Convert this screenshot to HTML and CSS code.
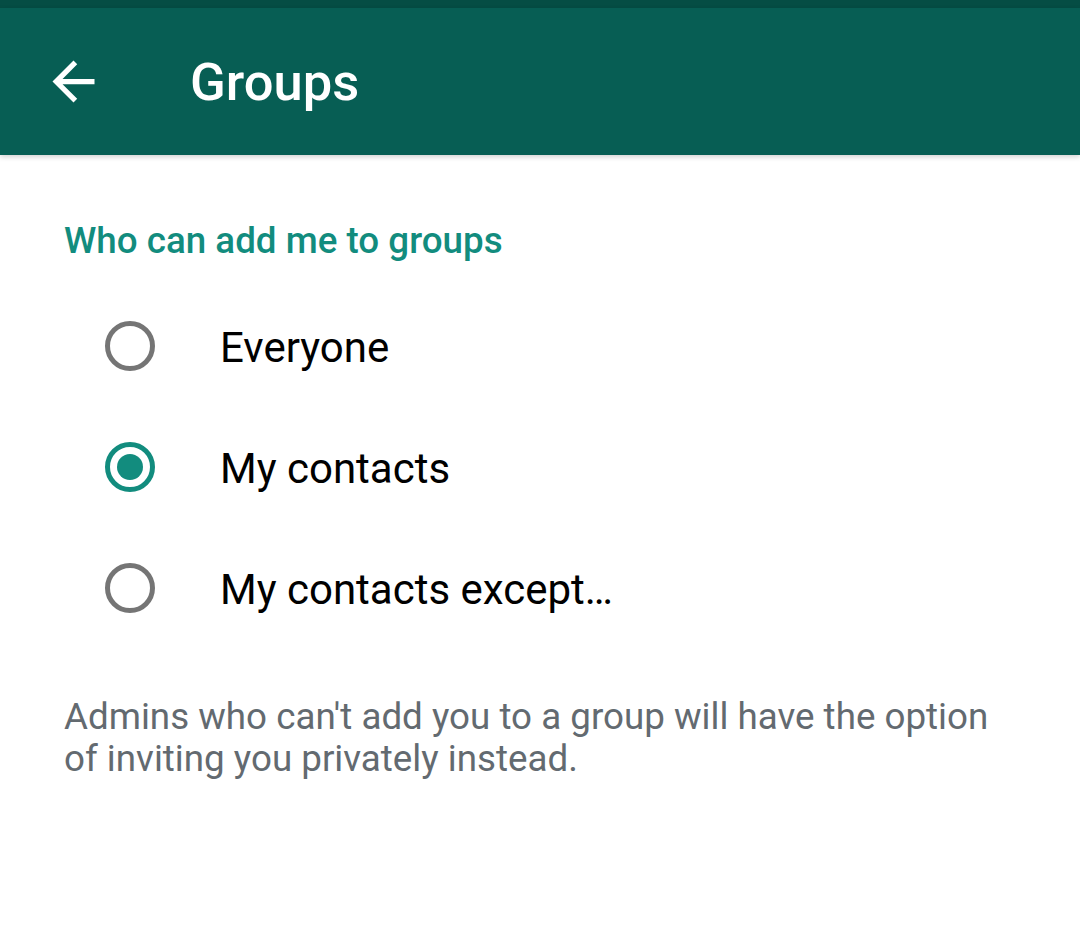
FILE: index.html
```html
<!DOCTYPE html>
<html>
<head>
<meta charset="utf-8">
<link rel="stylesheet" href="styles.css">
</head>
<body>
<div class="status"></div>
<header class="toolbar">
  <svg class="back" viewBox="0 0 24 24" width="63" height="63"><path fill="#fff" d="M20 11H7.83l5.59-5.59L12 4l-8 8 8 8 1.41-1.41L7.83 13H20v-2z"/></svg>
  <h1 class="title">Groups</h1>
</header>
<main class="content">
  <h2 class="section">Who can add me to groups</h2>
  <div class="options">
    <div class="row"><span class="radio"></span><span class="label">Everyone</span></div>
    <div class="row"><span class="radio on"></span><span class="label">My contacts</span></div>
    <div class="row"><span class="radio"></span><span class="label">My contacts except…</span></div>
  </div>
  <p class="note">Admins who can't add you to a group will have the option of inviting you privately instead.</p>
</main>
</body>
</html>
```
FILE: styles.css
```css
html, body {
  margin: 0;
  padding: 0;
  background: #fff;
  font-family: Roboto, "Noto Sans", sans-serif;
}
.status {
  height: 8px;
  background: #054d44;
}
.toolbar {
  height: 147px;
  background: #075e54;
  display: flex;
  align-items: center;
  box-shadow: 0 2px 5px rgba(0,0,0,0.18);
  position: relative;
}
.back {
  margin-left: 42px;
  flex: none;
}
.title {
  margin: 2px 0 0 85px;
  color: #fff;
  font-size: 52.5px;
  font-weight: 500;
  line-height: 1;
}
.content {
  padding: 68px 64px 0 64px;
}
.section {
  margin: 0;
  color: #128c7e;
  font-size: 36.75px;
  font-weight: 500;
  line-height: 1;
}
.options {
  margin-top: 25.5px;
}
.row {
  height: 121px;
  display: flex;
  align-items: center;
}
.radio {
  box-sizing: border-box;
  width: 50px;
  height: 50px;
  border: 5px solid #757575;
  border-radius: 50%;
  margin-left: 41px;
  display: flex;
  align-items: center;
  justify-content: center;
  flex: none;
}
.radio.on {
  border-color: #128c7e;
}
.radio.on::after {
  content: "";
  width: 26px;
  height: 26px;
  border-radius: 50%;
  background: #128c7e;
}
.label {
  margin-left: 65px;
  padding-top: 4px;
  font-size: 42px;
  color: #000;
  line-height: 1;
}
.note {
  margin: 48px 0 0 0;
  color: #636a70;
  font-size: 36.75px;
  line-height: 42px;
}
```
